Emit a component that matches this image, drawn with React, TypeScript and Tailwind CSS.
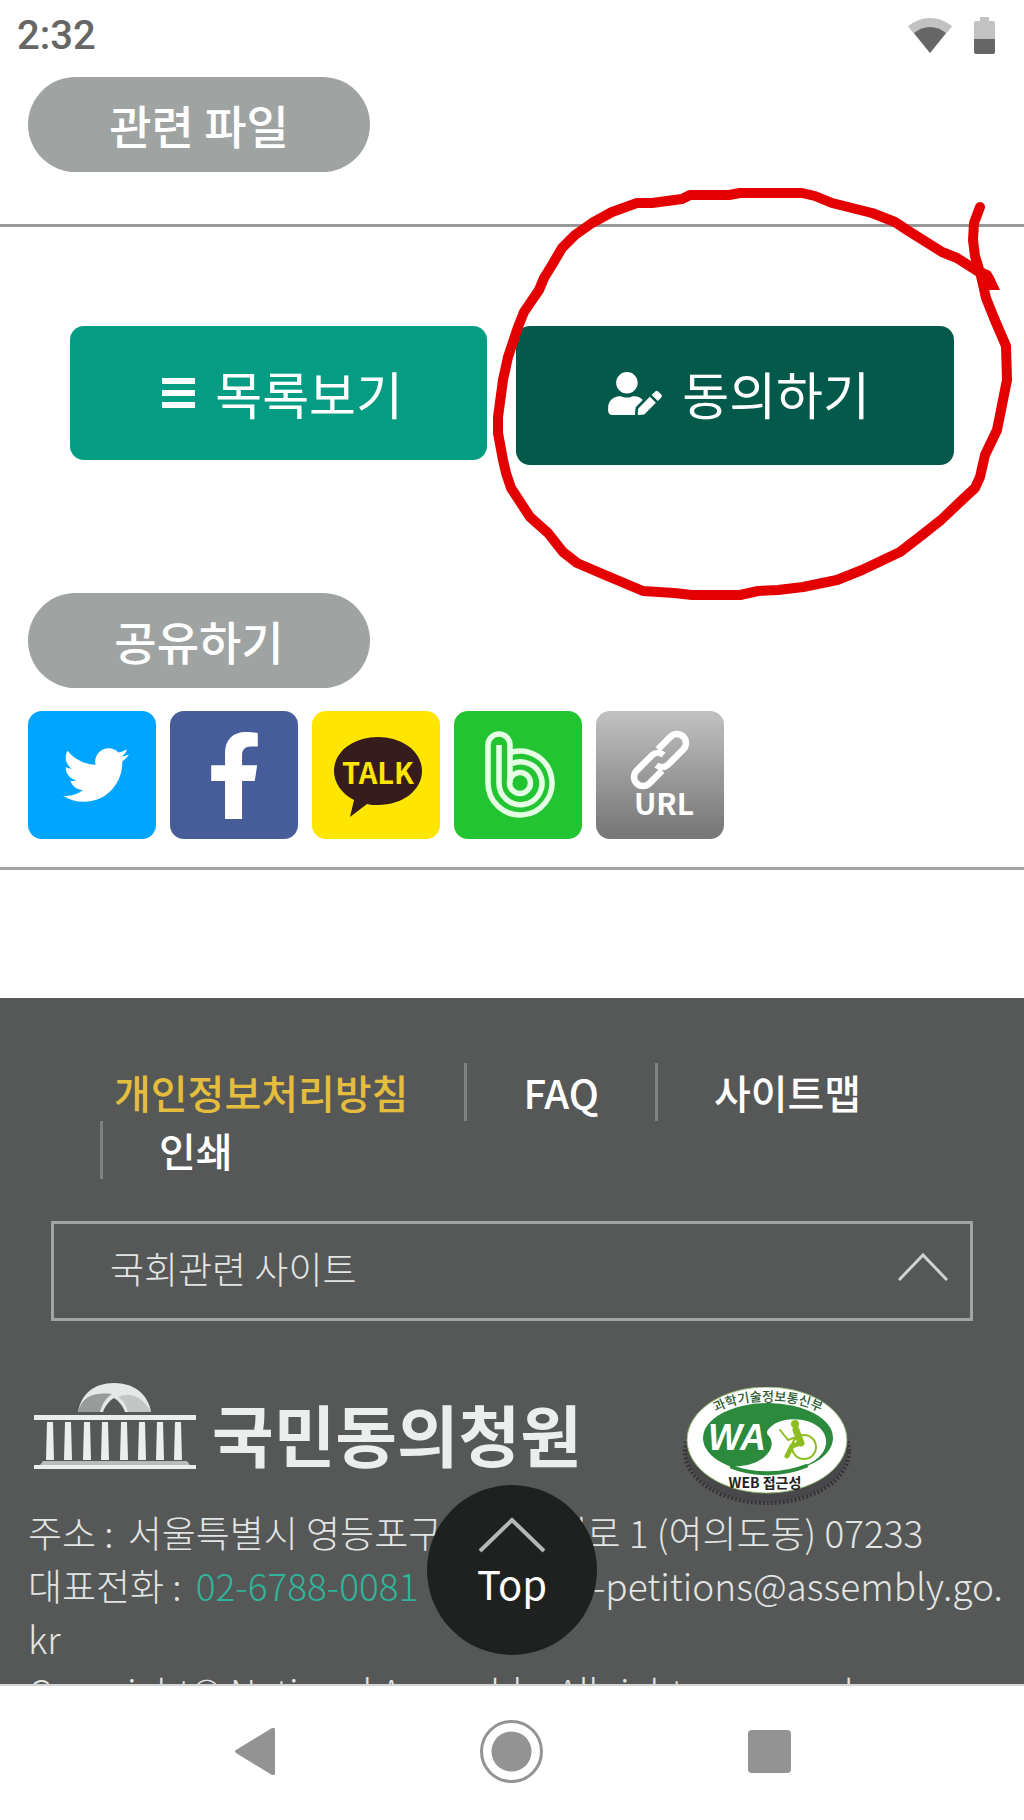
import type { ReactNode } from "react";
import { FaFacebookF, FaTwitter, FaUserEdit } from "react-icons/fa";

const footerLinks = [
  { label: "FAQ", href: "#faq" },
  { label: "사이트맵", href: "#sitemap" },
  { label: "인쇄", href: "#print" },
];

function StatusBar() {
  return (
    <header className="flex h-[71px] shrink-0 items-center justify-between pl-[17px] pr-[29px]">
      <span className="font-['Roboto',sans-serif] text-[40px] font-medium leading-none text-[#666]">
        2:32
      </span>
      <div className="flex items-center gap-[22px]">
        <svg className="h-[35px] w-[44px]" viewBox="0 0 44 35">
          <path d="M22 35 0 8.500C6 3 14 0 22 0s16 3 22 8.500Z" fill="#c2c2c2" />
          <path d="M22 35 6 15c5-4 10-6 16-6s11 2 16 6Z" fill="#666" />
        </svg>
        <svg className="h-[37px] w-[21px]" viewBox="0 0 21 37">
          <path d="M6 0h9v4h4a2 2 0 0 1 2 2v16H0V6a2 2 0 0 1 2-2h4Z" fill="#c2c2c2" />
          <path d="M0 22h21v13a2 2 0 0 1-2 2H2a2 2 0 0 1-2-2Z" fill="#666" />
        </svg>
      </div>
    </header>
  );
}

function Pill({ children }: { children: ReactNode }) {
  return (
    <h2 className="h-[95px] w-[342px] rounded-full bg-[#9fa4a2] text-center text-[46px] font-medium leading-[95px] text-white">
      {children}
    </h2>
  );
}

function ShareTile({ label, className, children }: { label: string; className: string; children: ReactNode }) {
  return (
    <button
      type="button"
      aria-label={label}
      className={`flex size-32 items-center justify-center overflow-hidden rounded-[14px] text-white ${className}`}
    >
      {children}
    </button>
  );
}

function KakaoIcon() {
  return (
    <svg className="size-32" viewBox="0 0 128 128">
      <path
        d="M66 26c25 0 44 15 44 34S91 94 66 94c-4 0-8 0-11-1L38 106l4-17C30 83 22 72 22 60c0-19 19-34 44-34Z"
        fill="#371c1d"
      />
      <text x="66" y="73" textAnchor="middle" fontSize="29" fontWeight="700" fill="#ffe600">
        TALK
      </text>
    </svg>
  );
}

function BandIcon() {
  return (
    <svg className="size-32" viewBox="0 0 128 128" fill="none" stroke="#e4ffe4" strokeWidth="5.500">
      <path d="M56 72V34a11 11 0 0 0-22 0v38a32 32 0 1 0 24-31" />
      <path d="M45 34v38a21.500 21.500 0 1 0 13-19.500" />
      <circle cx="66" cy="72" r="10.500" />
    </svg>
  );
}

function UrlIcon() {
  return (
    <svg className="size-32" viewBox="0 0 128 128">
      <g transform="translate(64 49) rotate(-45)" fill="none" stroke="#fff" strokeWidth="6.500">
        <path d="M6-9h18a9 9 0 0 1 0 18H2a9 9 0 0 1-8-8" />
        <path d="M-6 9h-18a9 9 0 0 1 0-18H-2a9 9 0 0 1 8 8" />
      </g>
      <text x="68" y="104" textAnchor="middle" fontSize="30" fontWeight="700" fill="#fff">
        URL
      </text>
    </svg>
  );
}

// hand-drawn marker around the agree button
function MarkerCircle() {
  return (
    <svg
      className="pointer-events-none absolute right-0 top-[180px] h-[430px] w-[540px]"
      viewBox="484 180 540 430"
      fill="none"
    >
      <path
        d="M980 207 974 223 973 240 975 256 981 276 986 298 994 318 1006 346 1007 380 1002 405 997 430 985 455 980 477 975 488 962 500 941 520 922 535 900 552 862 570 837 580 803 587 778 590 758 591 740 595H692L674 593 643 591 605 575 577 563 563 552 548 533 530 517 511 488 506 473 503 460 498 433V417L503 380 508 357 518 327 524 312 539 290 544 278 552 265 562 248 575 235 592 223 612 212 637 203H652L682 199 690 195H729L740 193H802L815 196 832 203 872 213 895 222 907 230 942 252 957 258 979 272 987 275"
        stroke="#e40000"
        strokeWidth="10"
        strokeLinecap="round"
        strokeLinejoin="round"
      />
      <path d="M984 268 993 275 1000 290H982Z" fill="#e40000" />
    </svg>
  );
}

function AssemblyLogo() {
  const columns = [16, 34, 53, 71, 90, 108, 126, 144];
  return (
    <svg className="h-[87px] w-[162px]" viewBox="0 0 162 87">
      <path d="M44 29C47 11 60 0 80 0s34 11 37 29Z" fill="#e6e8e7" />
      <path d="M44 29C48 13 60 9 78 11c-6 4-10 10-12 18Z" fill="#979b99" />
      <path d="M84 14c10-5 24-2 33 15H94c-2-7-5-12-10-15Z" fill="#c3c6c5" />
      <path d="M69 29c2-6 6-11 11-14 5 3 9 8 11 14Z" fill="#555857" />
      <rect y="32" width="162" height="5" fill="#eceeed" />
      {columns.map((x) => (
        <path key={x} d={`M${x - 3} 39h6l1 38h-8Z`} fill="#eceeed" />
      ))}
      <path d="M9 78h144l3 4H6Z" fill="#b9bcbb" />
      <rect y="82" width="162" height="4" fill="#eceeed" />
    </svg>
  );
}

function WebAccessBadge() {
  return (
    <svg className="h-[120px] w-[170px]" viewBox="-5 0 170 120">
      <ellipse cx="80" cy="64" rx="81" ry="51" fill="#48484b" />
      <ellipse cx="80" cy="65" rx="82" ry="51" fill="none" stroke="#353338" strokeWidth="4" strokeDasharray="2 2" />
      <ellipse cx="80" cy="53" rx="80" ry="53" fill="#fff" stroke="#8cb56e" />
      <ellipse cx="81" cy="51" rx="65" ry="35" fill="#2b8a3c" />
      <path
        d="M45 79c8 1 20-1 28-6 10-6 16-17 8-25-3-3 1-8 8-12 13-7 35-4 44 5 12 12 6 29-14 37-23 9-52 9-74 1Z"
        fill="#fff"
      />
      <path d="M45 80c22 9 52 8 74-1" fill="none" stroke="#2b8a3c" strokeWidth="4" strokeLinecap="round" />
      <text x="50" y="63" textAnchor="middle" fontSize="36" fontWeight="700" fontStyle="italic" fontFamily="Liberation Sans" fill="#fff">
        WA
      </text>
      <path id="badge-arc" d="M23 29C50 9 112 9 139 29" fill="none" />
      <text fontSize="13" fontWeight="500" fill="#2c5a34">
        <textPath href="#badge-arc" startOffset="50%" textAnchor="middle">
          과학기술정보통신부
        </textPath>
      </text>
      <g fill="none" stroke="#8dbd20" strokeLinecap="round" strokeLinejoin="round">
        <circle cx="117" cy="60" r="12" strokeWidth="2" />
        <path d="m93 43 8 10 11-4" strokeWidth="2" />
        <path d="m109 43 5 13" strokeWidth="7" />
        <path d="m114 56-9 3-5 10" strokeWidth="5" />
      </g>
      <circle cx="108" cy="37" r="4" fill="#8dbd20" />
      <text x="78" y="101" textAnchor="middle" fontSize="14" fontWeight="700" fill="#222">
        WEB 접근성
      </text>
    </svg>
  );
}

function Footer() {
  return (
    <footer className="bg-[#555857] pt-[65px] text-[#e3e5e4]">
      <ul className="flex flex-wrap pl-[100px] text-[40px] font-medium leading-[58px] text-white">
        <li className="pl-3.5 pr-14">
          <a href="#privacy" className="text-[#e5bd3c]">
            개인정보처리방침
          </a>
        </li>
        {footerLinks.map((link) => (
          <li key={link.label} className="border-l-[3px] border-[#7f8281] px-14">
            <a href={link.href}>{link.label}</a>
          </li>
        ))}
      </ul>

      <div className="relative mx-[51px] mt-[42px]">
        <select
          aria-label="국회관련 사이트"
          className="h-[100px] w-full appearance-none border-[3px] border-[#a0a5a3] bg-transparent px-14 pb-1 text-[37px] font-light text-[#e3e5e4]"
        >
          <option>국회관련 사이트</option>
        </select>
        <svg className="pointer-events-none absolute right-[25px] top-8 h-[29px] w-[50px]" viewBox="0 0 50 29">
          <path d="M1 27 25 2l24 25" fill="none" stroke="#d0d3d2" strokeWidth="3" />
        </svg>
      </div>

      <div className="mt-[62px] flex items-start pl-[34px]">
        <AssemblyLogo />
        <span className="ml-4 mt-2.5 text-[67px] font-bold leading-[80px] text-[#eceeed]">국민동의청원</span>
        <div className="ml-[100px] mt-1">
          <WebAccessBadge />
        </div>
      </div>

      <address className="-mt-px break-all pl-7 pr-4 text-[37px] font-light not-italic leading-[53px]">
        <p>
          <span className="mr-1.5">주소 :</span> 서울특별시 영등포구 의사당대로 1 (여의도동) 07233
        </p>
        <p>
          <span className="mr-1.5">대표전화 :</span>{" "}
          <a href="tel:02-6788-0081" className="mr-3.5 text-[#2fb59b]">
            02-6788-0081
          </a>{" "}
          E-mail : e-petitions@assembly.go.kr
        </p>
        <p>Copyright© National Assembly. All rights reserved.</p>
      </address>
    </footer>
  );
}

function NavigationBar() {
  return (
    <nav className="grid h-[136px] shrink-0 grid-cols-3 place-items-center border-t-2 border-[#d5d7d6] bg-white px-[126px] pb-1 text-[#939393]">
      <button type="button" aria-label="뒤로">
        <svg className="h-[47px] w-[40px]" viewBox="0 0 40 47">
          <path d="M37 0c2-1 3 0 3 2v43c0 2-1 3-3 2L1 25q-2-2 0-3Z" fill="currentColor" />
        </svg>
      </button>
      <button type="button" aria-label="홈">
        <svg className="size-[63px]" viewBox="0 0 63 63">
          <circle cx="31.500" cy="31.500" r="30" fill="none" stroke="currentColor" strokeWidth="3" />
          <circle cx="31.500" cy="31.500" r="20" fill="currentColor" />
        </svg>
      </button>
      <button type="button" aria-label="최근 앱" className="size-[43px] rounded bg-[#939393]" />
    </nav>
  );
}

export default function App() {
  return (
    <div className="relative flex h-screen flex-col overflow-hidden bg-white font-['Noto_Sans_CJK_KR',sans-serif]">
      <StatusBar />

      <main className="min-h-0 flex-1 overflow-hidden pt-1.5">
        <section className="border-b-[3px] border-[#999] px-7 pb-[52px]">
          <Pill>관련 파일</Pill>
        </section>

        {/* Actions */}
        <div className="flex items-start gap-[29px] px-[70px] pb-32 pt-[99px] text-[51px] leading-[134px] text-white">
          <button type="button" className="flex flex-20 items-center justify-center gap-5 rounded-[14px] bg-[#049d84] pl-2">
            <svg className="h-[30px] w-[33px]" viewBox="0 0 33 30" fill="currentColor">
              <rect width="33" height="6" />
              <rect y="12" width="33" height="6" />
              <rect y="24" width="33" height="6" />
            </svg>
            목록보기
          </button>
          <button type="button" className="flex flex-21 items-center justify-center gap-5 rounded-[14px] bg-[#045a4a] pb-[5px] pl-2">
            <FaUserEdit className="h-[43px] w-[54px]" />
            동의하기
          </button>
        </div>

        {/* Share */}
        <section className="mb-32 border-b-[3px] border-[#a0a3a2] px-7 pb-7">
          <Pill>공유하기</Pill>
          <div className="mt-[23px] flex gap-3.5">
            <ShareTile label="트위터" className="bg-[#00a5ff] pl-2">
              <FaTwitter size={66} />
            </ShareTile>
            <ShareTile label="페이스북" className="bg-[#465d9a]">
              <FaFacebookF size={87} />
            </ShareTile>
            <ShareTile label="카카오톡" className="bg-[#ffe600]">
              <KakaoIcon />
            </ShareTile>
            <ShareTile label="밴드" className="bg-[#22c531]">
              <BandIcon />
            </ShareTile>
            <ShareTile label="URL 복사" className="bg-linear-to-b from-[#c2c2c2] to-[#757575]">
              <UrlIcon />
            </ShareTile>
          </div>
        </section>

        <Footer />
      </main>

      <NavigationBar />
      <MarkerCircle />

      <a
        href="#top"
        className="absolute bottom-[165px] left-1/2 flex size-[170px] -translate-x-1/2 flex-col items-center rounded-full bg-[#1f2120] pt-8 text-[40px] leading-[60px] text-white"
      >
        <svg className="h-[36px] w-[68px]" viewBox="0 0 68 36">
          <path d="M2 34 34 3l32 31" fill="none" stroke="#b5b7b6" strokeWidth="4" />
        </svg>
        Top
      </a>
    </div>
  );
}
